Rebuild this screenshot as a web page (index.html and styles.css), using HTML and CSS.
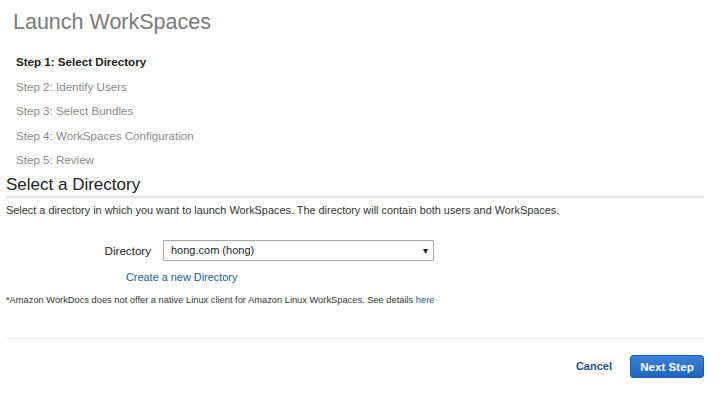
FILE: index.html
```html
<!DOCTYPE html>
<html>
<head>
<meta charset="utf-8">
<link rel="stylesheet" href="styles.css">
</head>
<body>
<div class="page">
  <h1 class="title">Launch WorkSpaces</h1>
  <ul class="steps">
    <li class="step active">Step 1: Select Directory</li>
    <li class="step">Step 2: Identify Users</li>
    <li class="step">Step 3: Select Bundles</li>
    <li class="step">Step 4: WorkSpaces Configuration</li>
    <li class="step">Step 5: Review</li>
  </ul>
  <h2 class="section">Select a Directory</h2>
  <p class="desc">Select a directory in which you want to launch WorkSpaces. The directory will contain both users and WorkSpaces.</p>
  <div class="form-row">
    <label class="label">Directory</label>
    <div class="select"><span>hong.com (hong)</span><span class="arrow">&#9662;</span></div>
  </div>
  <div class="link-row"><a class="link">Create a new Directory</a></div>
  <p class="note">*Amazon WorkDocs does not offer a native Linux client for Amazon Linux WorkSpaces. See details <a class="link">here</a></p>
  <div class="footer">
    <a class="cancel">Cancel</a>
    <button class="next">Next Step</button>
  </div>
</div>
</body>
</html>
```
FILE: styles.css
```css
* { box-sizing: border-box; }
body { margin: 0; background: #fff; font-family: "Liberation Sans", Arial, sans-serif; color: #333; }
.page { width: 698px; margin-left: 6px; }
.title { margin: 0; padding: 9px 0 0 7px; font-size: 21.5px; line-height: 26px; font-weight: normal; color: #7a7a7a; }
.steps { list-style: none; margin: 15px 0 0 0; padding: 0 0 0 10px; }
.step { font-size: 11.6px; line-height: 24.5px; height: 24.5px; color: #8a8a8a; }
.step.active { font-weight: bold; color: #222; font-size: 11.6px; }
.section { margin: 1px 0 0 0; font-size: 17px; font-weight: normal; color: #222; line-height: 22px; padding-bottom: 0; border-bottom: 2px solid #e4e4e4; }
.desc { margin: 5px 0 0 0; font-size: 10.9px; line-height: 14px; color: #333; }
.form-row { display: flex; align-items: center; margin-top: 23px; }
.label { width: 157px; text-align: right; font-size: 11.6px; color: #222; padding-right: 12px; }
.select { width: 271px; height: 21px; border: 1px solid #aaa; border-radius: 1px; display: flex; align-items: center; justify-content: space-between; padding: 0 5px 0 7px; font-size: 11px; color: #222; box-shadow: inset 0 1px 1px rgba(0,0,0,0.06); }
.arrow { font-size: 10px; color: #222; }
.link-row { padding-left: 120px; margin-top: 8px; line-height: 14px; }
.link { color: #1a5c8f; font-size: 10.9px; text-decoration: none; }
.note { margin: 10px 0 0 0; font-size: 9.3px; line-height: 12px; color: #333; }
.note .link { font-size: 9.3px; }
.footer { margin-top: 32px; border-top: 1px solid #e8e8e8; display: flex; justify-content: flex-end; align-items: center; padding-top: 16px; gap: 18px; }
.cancel { color: #1f4e79; font-size: 11px; font-weight: bold; }
.next { height: 23px; width: 74px; border: 1px solid #1a5aa8; border-radius: 3px; background: linear-gradient(#3b82d8, #1f64bd); color: #fff; font-family: "Liberation Sans", Arial, sans-serif; font-weight: bold; font-size: 11.6px; padding: 0; }
```
